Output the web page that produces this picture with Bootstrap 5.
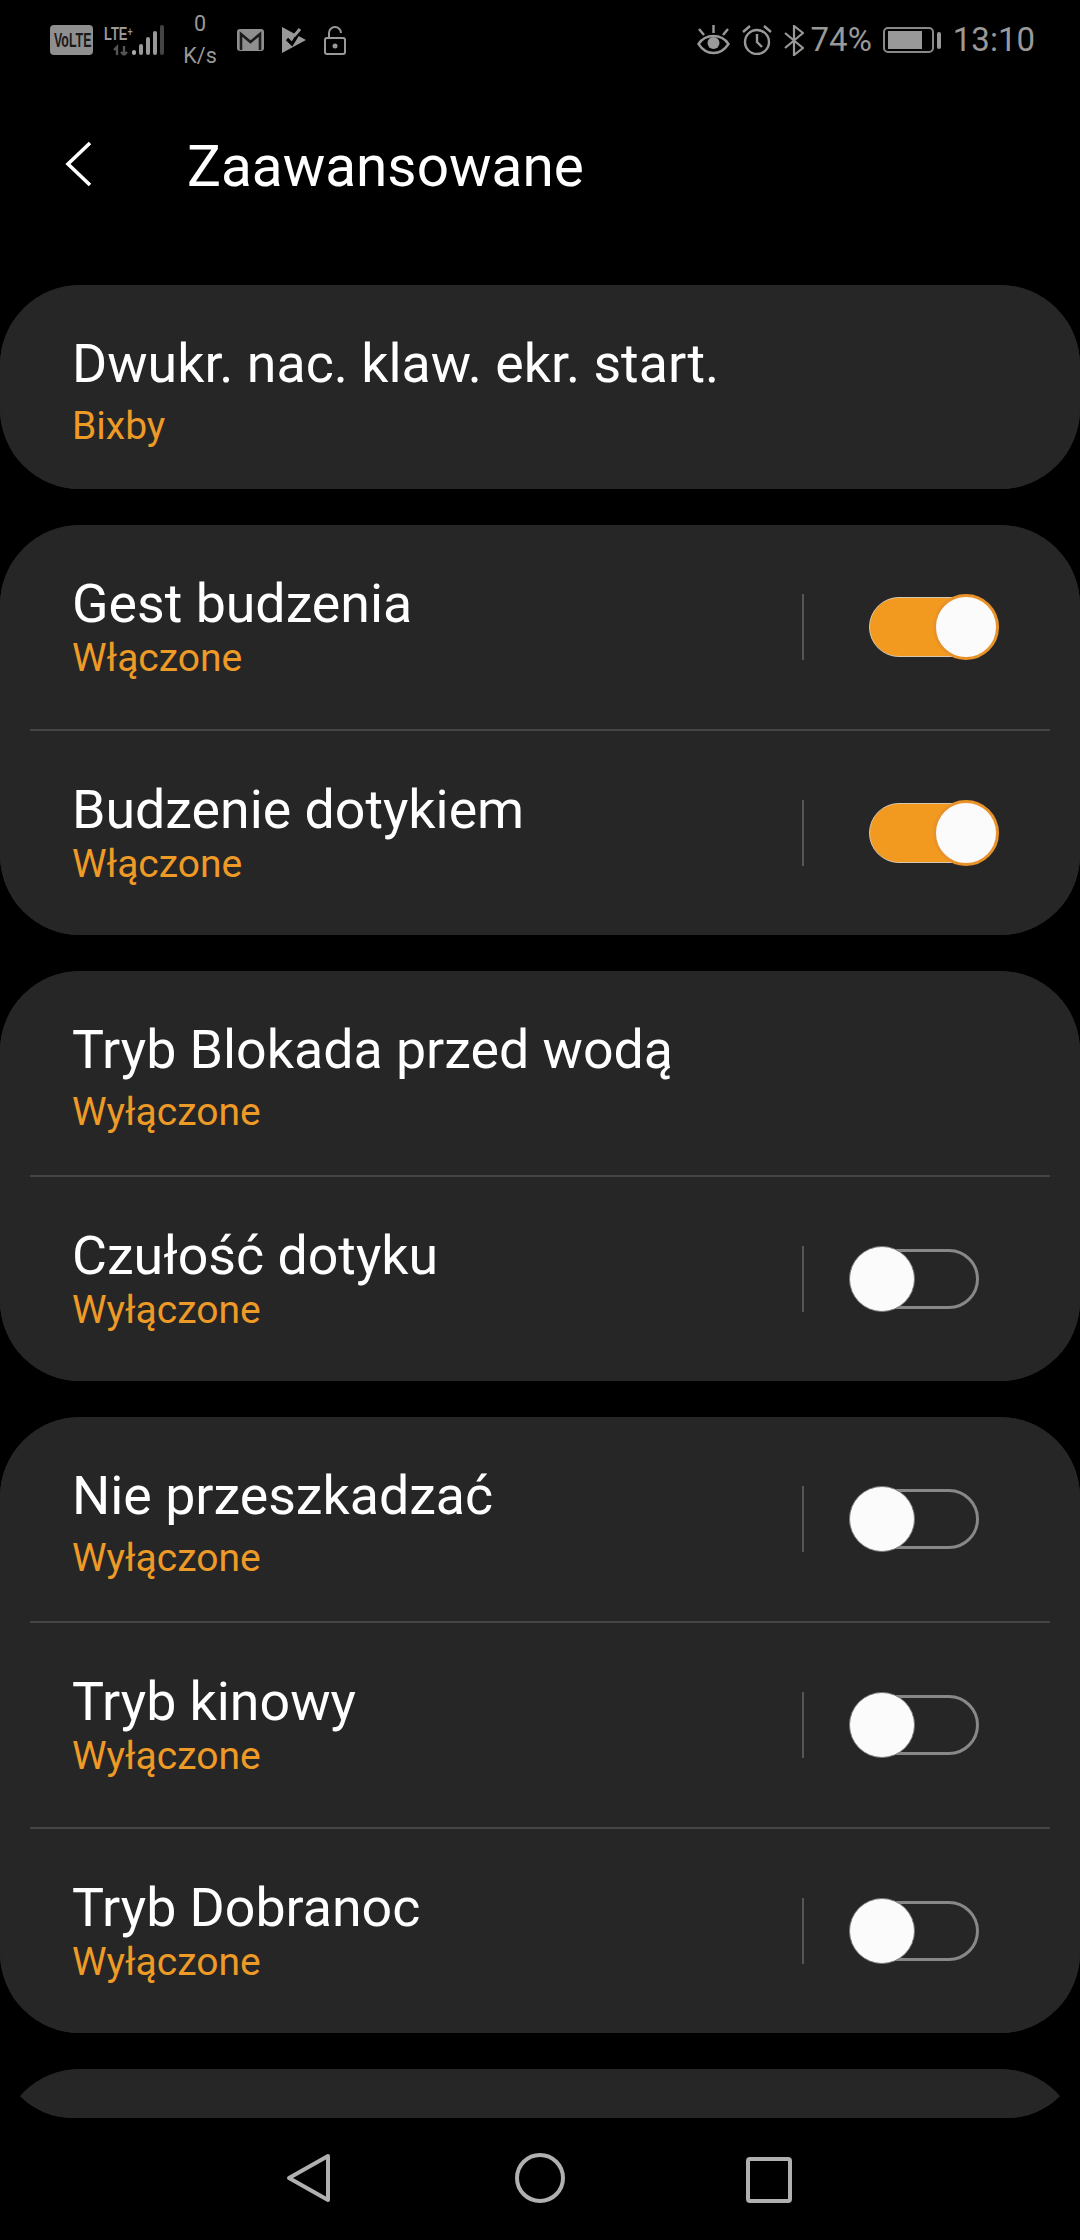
<!DOCTYPE html>
<html lang="pl">
<head>
    <meta charset="UTF-8">
    <meta name="viewport" content="width=device-width, initial-scale=1.0">
    <title>Zaawansowane</title>
    <link href="https://cdn.jsdelivr.net/npm/bootstrap@5.3.0/dist/css/bootstrap.min.css" rel="stylesheet">
    <style>
        body {
            background-color: #000;
            font-family: Roboto, "Liberation Sans", sans-serif;
            margin: 0;
        }
        .screen {
            width: 1080px;
            height: 2240px;
            overflow: hidden;
        }
        .scroll-area {
            height: 2118px;
            overflow: hidden;
            border-radius: 0 0 72px 72px;
        }
        .status-bar {
            height: 80px;
            padding: 0 45px 0 50px;
            color: #999;
        }
        .status-left {
            gap: 18px;
        }
        .volte-icon {
            margin-right: -7px;
        }
        .speed-text {
            width: 34px;
            margin-right: 2px;
            font-size: 21.500px;
            line-height: 32px;
            text-align: center;
        }
        .status-right {
            font-size: 33px;
            line-height: 40px;
        }
        .eye-icon {
            margin-right: 12px;
        }
        .alarm-icon {
            margin-right: 12px;
        }
        .bt-icon {
            margin-right: 7px;
        }
        .battery-icon {
            margin: 0 12px 0 11px;
        }
        .toolbar {
            height: 205px;
            padding: 56px 0 0 63px;
        }
        .toolbar-title {
            margin: -1px 0 0 94px;
            font-size: 56.700px;
            line-height: 64px;
            font-weight: 400;
            color: #fff;
        }
        .setting-group {
            --bs-list-group-bg: #262626;
            --bs-list-group-color: #fff;
            --bs-list-group-border-width: 0;
            --bs-list-group-border-radius: 80px;
            margin-bottom: 36px;
            background: #262626;
        }
        .setting-row {
            height: 204px;
            padding: 49px 81px 0 72px;
        }
        .setting-line {
            height: 2px;
            margin: 0 30px;
            background: #454545;
        }
        .setting-title {
            font-size: 53.700px;
            line-height: 60px;
        }
        .setting-sub {
            margin-top: 2px;
            font-size: 39px;
            line-height: 44px;
            color: #ee9a26;
        }
        .setting-sub.sub-wide {
            margin-top: 10px;
        }
        .setting-end {
            height: 204px;
            margin-top: -49px;
        }
        .row-rule {
            width: 2px;
            height: 66px;
            margin-right: 45px;
            background: #555;
        }
        .toggle-box {
            position: relative;
            width: 150px;
            height: 66px;
        }
        .toggle-track {
            position: absolute;
            top: 3px;
            width: 120px;
            height: 60px;
            border-radius: 30px;
        }
        .toggle-box.is-on .toggle-track {
            left: 20px;
            background: #f29a1f;
            border: 1px solid #d8c7ad;
        }
        .toggle-box.is-off .toggle-track {
            left: 10px;
            border: 3px solid #888;
        }
        .toggle-thumb {
            position: absolute;
            top: 0;
            width: 66px;
            height: 66px;
            border-radius: 50%;
            background: #fbfbfb;
        }
        .toggle-box.is-on .toggle-thumb {
            right: 0;
            border: 3px solid #e8922a;
        }
        .toggle-box.is-off .toggle-thumb {
            left: 0;
            border: 1px solid #777;
        }
        .nav-keys {
            height: 122px;
            padding: 35px 0 0 286px;
        }
        .nav-home {
            margin: 0 181px 0 183px;
        }
    </style>
</head>
<body>
    <div class="screen">
        <div class="scroll-area">
            <div class="status-bar d-flex justify-content-between align-items-center">
                <div class="status-left d-flex align-items-center">
                    <svg class="volte-icon" width="43" height="30" viewBox="0 0 43 30">
                        <rect width="43" height="30" rx="4" fill="#8f8f8f"/>
                        <text transform="translate(4 22) scale(.62 1)" font-family="Liberation Sans" font-weight="700" font-size="20" fill="#1a1a1a">VoLTE</text>
                    </svg>
                    <svg width="61" height="32" viewBox="0 0 61 32">
                        <text transform="translate(0 16) scale(.68 1)" font-family="Liberation Sans" font-weight="700" font-size="19" fill="#999">LTE<tspan font-size="13" dy="-4">+</tspan></text>
                        <path d="M13 31v-8l-3 3M20 22v9M20 31l-3-3M20 31l3-3" fill="none" stroke="#555" stroke-width="2.400"/>
                        <rect x="28" y="26" width="4" height="5" rx="2" fill="#aaa"/>
                        <rect x="35" y="20" width="4" height="11" rx="2" fill="#999"/>
                        <rect x="42" y="13" width="4" height="18" rx="2" fill="#999"/>
                        <rect x="49" y="7" width="4" height="24" rx="2" fill="#999"/>
                        <rect x="56" y="1" width="4" height="30" rx="2" fill="#444"/>
                    </svg>
                    <div class="speed-text">0<br>K/s</div>
                    <svg width="27" height="24" viewBox="0 0 27 24">
                        <rect x="0" y="1" width="27" height="22" rx="3" fill="#8f8f8f"/>
                        <path d="M4 22V6l9.500 8L23 6v16" fill="none" stroke="#1c1c1c" stroke-width="2.600"/>
                    </svg>
                    <svg width="24" height="26" viewBox="0 0 24 26">
                        <path d="M0 0l24 13L0 26z" fill="#999"/>
                        <path d="M5 12l5 5 8-13" fill="none" stroke="#000" stroke-width="3.200"/>
                        <path d="M12 9l6-7" fill="none" stroke="#999" stroke-width="3"/>
                    </svg>
                    <svg width="22" height="29" viewBox="0 0 22 29">
                        <path d="M5 12V7a6 6 0 0 1 12 0" fill="none" stroke="#999" stroke-width="2"/>
                        <rect x="1" y="12" width="20" height="16" rx="2" fill="none" stroke="#999" stroke-width="2"/>
                        <circle cx="11" cy="20" r="2.500" fill="#999"/>
                    </svg>
                </div>
                <div class="status-right d-flex align-items-center">
                    <svg class="eye-icon" width="33" height="30" viewBox="0 0 33 30">
                        <path d="M1.500 19c4-6 9-8 15-8s11 2 15 8c-4 6-9 9-15 9s-11-3-15-9z" fill="none" stroke="#999" stroke-width="2.400"/>
                        <circle cx="16.500" cy="18" r="6" fill="#999"/>
                        <path d="M16.500 8V0M7 10L2 4M26 10l5-6" stroke="#999" stroke-width="2.400"/>
                    </svg>
                    <svg class="alarm-icon" width="30" height="30" viewBox="0 0 30 30">
                        <circle cx="15" cy="17" r="12" fill="none" stroke="#999" stroke-width="2.400"/>
                        <path d="M15 9v8l5 5M1 7l7-6M29 7l-7-6" fill="none" stroke="#999" stroke-width="2.400"/>
                    </svg>
                    <svg class="bt-icon" width="20" height="31" viewBox="0 0 20 31">
                        <path d="M1 8l18 15-9 7V1l9 7L1 23" fill="none" stroke="#999" stroke-width="2.200"/>
                    </svg>
                    <span>74%</span>
                    <svg class="battery-icon" width="58" height="26" viewBox="0 0 58 26">
                        <rect x="1" y="1" width="49" height="24" rx="4" fill="none" stroke="#888" stroke-width="2"/>
                        <rect x="5" y="4" width="34" height="18" fill="#999"/>
                        <rect x="54" y="5" width="4" height="17" rx="2" fill="#999"/>
                    </svg>
                    <span>13:10</span>
                </div>
            </div>

            <div class="toolbar d-flex align-items-start">
                <svg class="mt-1" width="30" height="48" viewBox="0 0 30 48">
                    <path d="M27 3L5 24l22 21" fill="none" stroke="#fff" stroke-width="3.600"/>
                </svg>
                <h1 class="toolbar-title">Zaawansowane</h1>
            </div>

            <div class="list-group setting-group">
                <div class="list-group-item setting-row">
                    <div class="setting-title">Dwukr. nac. klaw. ekr. start.</div>
                    <div class="setting-sub sub-wide">Bixby</div>
                </div>
            </div>

            <div class="list-group setting-group">
                <div class="list-group-item setting-row d-flex justify-content-between">
                    <div>
                        <div class="setting-title">Gest budzenia</div>
                        <div class="setting-sub">Włączone</div>
                    </div>
                    <div class="setting-end d-flex align-items-center">
                        <div class="row-rule"></div>
                        <div class="toggle-box is-on"><div class="toggle-track"></div><div class="toggle-thumb"></div></div>
                    </div>
                </div>
                <div class="setting-line"></div>
                <div class="list-group-item setting-row d-flex justify-content-between">
                    <div>
                        <div class="setting-title">Budzenie dotykiem</div>
                        <div class="setting-sub">Włączone</div>
                    </div>
                    <div class="setting-end d-flex align-items-center">
                        <div class="row-rule"></div>
                        <div class="toggle-box is-on"><div class="toggle-track"></div><div class="toggle-thumb"></div></div>
                    </div>
                </div>
            </div>

            <div class="list-group setting-group">
                <div class="list-group-item setting-row">
                    <div class="setting-title">Tryb Blokada przed wodą</div>
                    <div class="setting-sub sub-wide">Wyłączone</div>
                </div>
                <div class="setting-line"></div>
                <div class="list-group-item setting-row d-flex justify-content-between">
                    <div>
                        <div class="setting-title">Czułość dotyku</div>
                        <div class="setting-sub">Wyłączone</div>
                    </div>
                    <div class="setting-end d-flex align-items-center">
                        <div class="row-rule"></div>
                        <div class="toggle-box is-off"><div class="toggle-track"></div><div class="toggle-thumb"></div></div>
                    </div>
                </div>
            </div>

            <div class="list-group setting-group">
                <div class="list-group-item setting-row d-flex justify-content-between">
                    <div>
                        <div class="setting-title">Nie przeszkadzać</div>
                        <div class="setting-sub sub-wide">Wyłączone</div>
                    </div>
                    <div class="setting-end d-flex align-items-center">
                        <div class="row-rule"></div>
                        <div class="toggle-box is-off"><div class="toggle-track"></div><div class="toggle-thumb"></div></div>
                    </div>
                </div>
                <div class="setting-line"></div>
                <div class="list-group-item setting-row d-flex justify-content-between">
                    <div>
                        <div class="setting-title">Tryb kinowy</div>
                        <div class="setting-sub">Wyłączone</div>
                    </div>
                    <div class="setting-end d-flex align-items-center">
                        <div class="row-rule"></div>
                        <div class="toggle-box is-off"><div class="toggle-track"></div><div class="toggle-thumb"></div></div>
                    </div>
                </div>
                <div class="setting-line"></div>
                <div class="list-group-item setting-row d-flex justify-content-between">
                    <div>
                        <div class="setting-title">Tryb Dobranoc</div>
                        <div class="setting-sub">Wyłączone</div>
                    </div>
                    <div class="setting-end d-flex align-items-center">
                        <div class="row-rule"></div>
                        <div class="toggle-box is-off"><div class="toggle-track"></div><div class="toggle-thumb"></div></div>
                    </div>
                </div>
            </div>

            <div class="list-group setting-group">
                <div class="list-group-item setting-row"></div>
            </div>
        </div>

        <div class="nav-keys d-flex align-items-start">
            <svg width="46" height="50" viewBox="0 0 46 50">
                <path d="M42 3L3 25l39 22z" fill="none" stroke="#b0b0b0" stroke-width="4" stroke-linejoin="round"/>
            </svg>
            <svg class="nav-home" width="50" height="50" viewBox="0 0 50 50">
                <circle cx="25" cy="25" r="23" fill="none" stroke="#b0b0b0" stroke-width="4"/>
            </svg>
            <svg class="mt-1" width="46" height="46" viewBox="0 0 46 46">
                <rect x="2" y="2" width="42" height="42" rx="2" fill="none" stroke="#b0b0b0" stroke-width="4"/>
            </svg>
        </div>
    </div>
</body>
</html>
